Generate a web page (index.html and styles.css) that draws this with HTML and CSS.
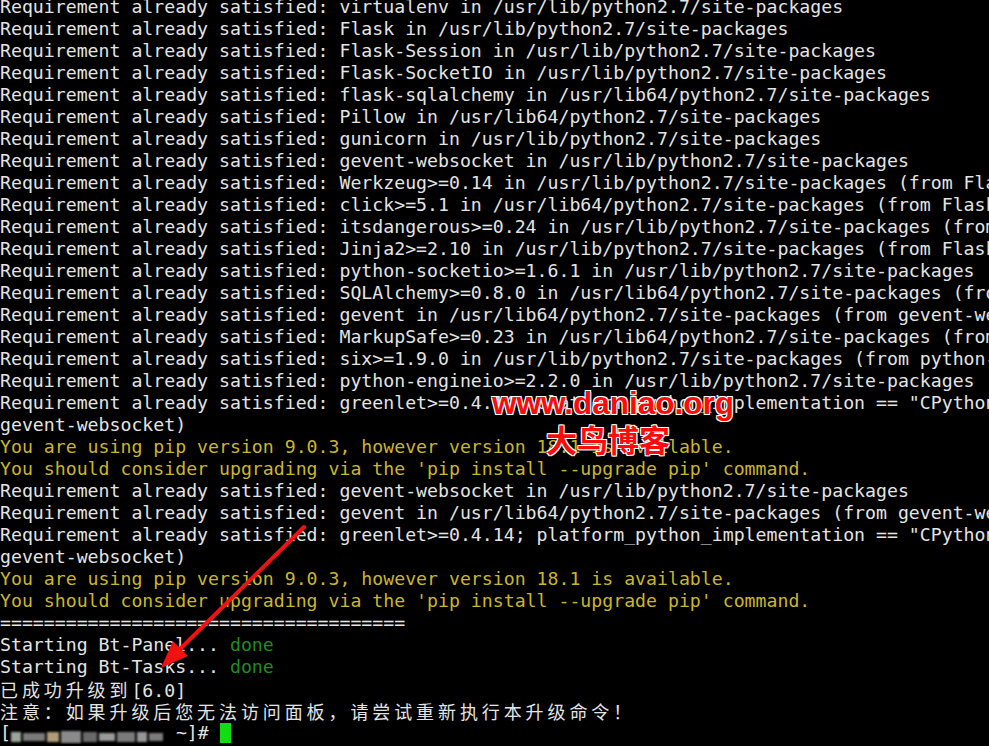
FILE: index.html
```html
<!DOCTYPE html>
<html lang="zh">
<head>
<meta charset="utf-8">
<title>terminal</title>
<link rel="stylesheet" href="styles.css">
</head>
<body>
<div class="term">
<div class="ln">Requirement already satisfied: virtualenv in /usr/lib/python2.7/site-packages</div>
<div class="ln">Requirement already satisfied: Flask in /usr/lib/python2.7/site-packages</div>
<div class="ln">Requirement already satisfied: Flask-Session in /usr/lib/python2.7/site-packages</div>
<div class="ln">Requirement already satisfied: Flask-SocketIO in /usr/lib/python2.7/site-packages</div>
<div class="ln">Requirement already satisfied: flask-sqlalchemy in /usr/lib64/python2.7/site-packages</div>
<div class="ln">Requirement already satisfied: Pillow in /usr/lib64/python2.7/site-packages</div>
<div class="ln">Requirement already satisfied: gunicorn in /usr/lib/python2.7/site-packages</div>
<div class="ln">Requirement already satisfied: gevent-websocket in /usr/lib/python2.7/site-packages</div>
<div class="ln">Requirement already satisfied: Werkzeug&gt;=0.14 in /usr/lib/python2.7/site-packages (from Flask)</div>
<div class="ln">Requirement already satisfied: click&gt;=5.1 in /usr/lib64/python2.7/site-packages (from Flask)</div>
<div class="ln">Requirement already satisfied: itsdangerous&gt;=0.24 in /usr/lib/python2.7/site-packages (from Flask)</div>
<div class="ln">Requirement already satisfied: Jinja2&gt;=2.10 in /usr/lib/python2.7/site-packages (from Flask)</div>
<div class="ln">Requirement already satisfied: python-socketio&gt;=1.6.1 in /usr/lib/python2.7/site-packages</div>
<div class="ln">Requirement already satisfied: SQLAlchemy&gt;=0.8.0 in /usr/lib64/python2.7/site-packages (from flask-sqlalchemy)</div>
<div class="ln">Requirement already satisfied: gevent in /usr/lib64/python2.7/site-packages (from gevent-websocket)</div>
<div class="ln">Requirement already satisfied: MarkupSafe&gt;=0.23 in /usr/lib64/python2.7/site-packages (from Jinja2)</div>
<div class="ln">Requirement already satisfied: six&gt;=1.9.0 in /usr/lib/python2.7/site-packages (from python-socketio)</div>
<div class="ln">Requirement already satisfied: python-engineio&gt;=2.2.0 in /usr/lib/python2.7/site-packages</div>
<div class="ln">Requirement already satisfied: greenlet&gt;=0.4.14; platform_python_implementation == "CPython" in /usr/lib64</div>
<div class="ln">gevent-websocket)</div>
<div class="ln yel">You are using pip version 9.0.3, however version 18.1 is available.</div>
<div class="ln yel">You should consider upgrading via the 'pip install --upgrade pip' command.</div>
<div class="ln">Requirement already satisfied: gevent-websocket in /usr/lib/python2.7/site-packages</div>
<div class="ln">Requirement already satisfied: gevent in /usr/lib64/python2.7/site-packages (from gevent-websocket)</div>
<div class="ln">Requirement already satisfied: greenlet&gt;=0.4.14; platform_python_implementation == "CPython" in /usr/lib64</div>
<div class="ln">gevent-websocket)</div>
<div class="ln yel">You are using pip version 9.0.3, however version 18.1 is available.</div>
<div class="ln yel">You should consider upgrading via the 'pip install --upgrade pip' command.</div>
<div class="ln">=====================================</div>
<div class="ln">Starting Bt-Panel... <span class="grn">done</span></div>
<div class="ln">Starting Bt-Tasks... <span class="grn">done</span></div>
<div class="ln"><span class="cjk">已成功升级到</span>[6.0]</div>
<div class="ln"><span class="cjk">注意：如果升级后您无法访问面板，请尝试重新执行本升级命令！</span></div>
<div class="ln">[<span class="blur"><i class="b1"></i><i class="b2"></i><i class="b3"></i><i class="b4"></i><i class="b5"></i><i class="b6"></i><i class="b7"></i><i class="b8"></i><i class="b9"></i></span> ~]# <span class="cursor"></span></div>
</div>

<div class="wm">
  <div class="wm-url">www.daniao.org</div>
  <div class="wm-cn">大鸟博客</div>
</div>

<svg class="arrow" width="989" height="746" viewBox="0 0 989 746">
  <line x1="304" y1="527" x2="178" y2="651" stroke="#f01212" stroke-width="4" stroke-linecap="round"/>
  <polygon points="161,668 188,656 173,641" fill="#f01212"/>
</svg>
</body>
</html>
```

FILE: styles.css
```css
html, body {
  margin: 0;
  padding: 0;
  background: #000;
  width: 989px;
  height: 746px;
  overflow: hidden;
}
body {
  position: relative;
}
.term {
  margin-top: -4px;
  font-family: "DejaVu Sans Mono", "Noto Sans CJK SC", monospace;
  font-size: 18.2px;
  line-height: 22px;
  color: #e4e4e4;
}
.ln {
  white-space: pre;
  height: 22px;
  overflow: hidden;
}
.yel {
  color: #cbb62a;
}
.grn {
  color: #1f8d1f;
}
.cjk {
  font-family: "Noto Sans CJK SC", sans-serif;
  font-size: 18px;
  letter-spacing: 3.9px;
}
.blur {
  display: inline-flex;
  vertical-align: -3px;
  width: 154px;
  height: 16px;
  align-items: center;
  gap: 2px;
  filter: blur(0.8px);
}
.blur i {
  display: block;
  height: 10px;
  background: #8a8a8a;
}
.b1 { width: 10px; background: #9aa69a !important; }
.b2 { width: 22px; background: #7a7a7a !important; height: 8px !important; }
.b3 { width: 12px; background: #b09c7a !important; }
.b4 { width: 20px; background: #8a8a8a !important; height: 12px !important; }
.b5 { width: 14px; background: #6a6a6a !important; }
.b6 { width: 16px; background: #9a9a9a !important; height: 8px !important; }
.b7 { width: 18px; background: #7a7a7a !important; }
.b8 { width: 10px; background: #969696 !important; }
.b9 { width: 14px; background: #7c7c7c !important; height: 8px !important; }
.cursor {
  display: inline-block;
  width: 11px;
  height: 20px;
  vertical-align: -4px;
  background: #12dd12;
}
.wm {
  position: absolute;
  left: 486px;
  top: 384px;
  display: flex;
  flex-direction: column;
  align-items: center;
  width: 254px;
}
.wm-url {
  font-family: "Liberation Sans", Arial, sans-serif;
  font-weight: bold;
  font-size: 31.5px;
  line-height: 38px;
  color: #ff0a0a;
  text-shadow: 1px 1px 0 #fff, -1px -1px 0 #fff, 1px -1px 0 #fff, -1px 1px 0 #fff;
}
.wm-cn {
  font-family: "Noto Sans CJK SC", sans-serif;
  font-weight: bold;
  font-size: 31px;
  line-height: 36px;
  color: #ff0a0a;
  text-shadow: 1px 1px 0 #fff, -1px -1px 0 #fff, 1px -1px 0 #fff, -1px 1px 0 #fff;
  margin-left: -10px;
  margin-top: -1px;
}
.arrow {
  position: absolute;
  left: 0;
  top: 0;
  pointer-events: none;
}
```
